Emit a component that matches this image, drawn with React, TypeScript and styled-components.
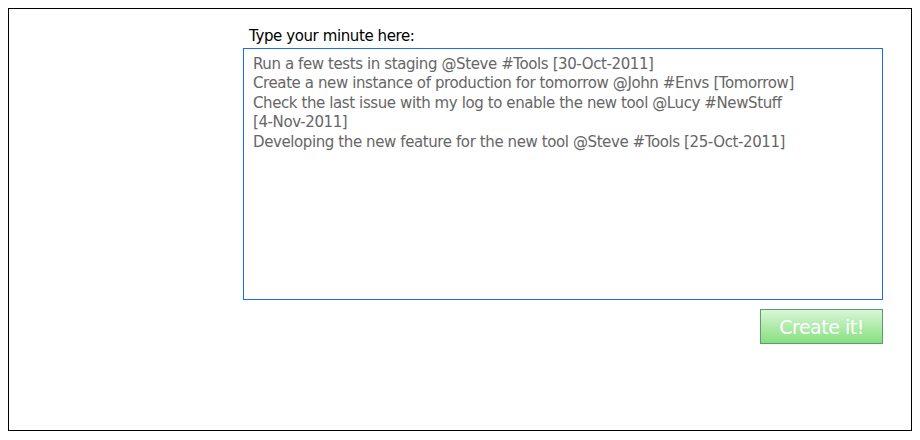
import React from "react";
import styled, { createGlobalStyle } from "styled-components";

const Global = createGlobalStyle`
  body { margin: 8px; background: #fff; font-family: "DejaVu Sans", Verdana, sans-serif; }
`;

const Frame = styled.div`
  box-sizing: border-box;
  width: 904px;
  height: 423px;
  border: 1px solid #000;
  padding: 18px 28px 0 234px;
`;

const Form = styled.div`
  display: flex;
  flex-direction: column;
  align-items: flex-end;
  gap: 9px;
`;

const Field = styled.label`
  display: flex;
  flex-direction: column;
  gap: 2px;
  width: 100%;
`;

const Label = styled.span`
  font-family: "DejaVu Sans", Verdana, sans-serif;
  font-size: 15px;
  line-height: 19px;
  color: #000;
  padding-left: 6px;
  letter-spacing: -0.4px;
`;

const Area = styled.textarea`
  box-sizing: border-box;
  width: 640px;
  height: 252px;
  border: 1px solid #1a6cf0;
  outline: none;
  resize: none;
  padding: 6px 9px;
  font-family: "DejaVu Sans", Verdana, sans-serif;
  font-size: 15px;
  line-height: 19.4px;
  letter-spacing: -0.4px;
  color: #666;
  background: #fff;
  overflow: hidden;
`;

const Button = styled.button`
  box-sizing: border-box;
  width: 123px;
  height: 35px;
  border: 1px solid #5a9e70;
  background: linear-gradient(to bottom, #d9f6d7 0%, #86e07e 100%);
  color: #fff;
  font-family: "DejaVu Sans", Verdana, sans-serif;
  font-size: 19px;
  letter-spacing: -0.5px;
  padding: 0;
  cursor: pointer;
`;

const text = `Run a few tests in staging @Steve #Tools [30-Oct-2011]
Create a new instance of production for tomorrow @John #Envs [Tomorrow]
Check the last issue with my log to enable the new tool @Lucy #NewStuff
[4-Nov-2011]
Developing the new feature for the new tool @Steve #Tools [25-Oct-2011]`;

export default function App() {
  return (
    <>
      <Global />
      <Frame>
        <Form>
          <Field>
            <Label>Type your minute here:</Label>
            <Area readOnly defaultValue={text} />
          </Field>
          <Button>Create it!</Button>
        </Form>
      </Frame>
    </>
  );
}
